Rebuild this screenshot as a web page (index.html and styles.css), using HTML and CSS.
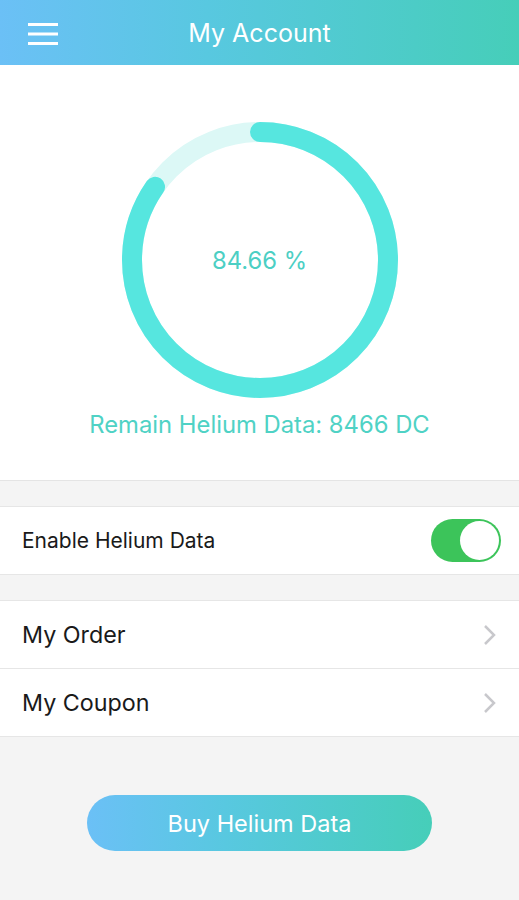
FILE: index.html
```html
<!DOCTYPE html>
<html lang="en">
<head>
    <meta charset="UTF-8">
    <meta name="viewport" content="width=device-width, initial-scale=1.0">
    <title>My Account</title>
    <link rel="stylesheet" href="styles.css">
</head>
<body>
    <header class="topbar">
        <button class="menu-btn" aria-label="Menu">
            <svg width="30" height="24" viewBox="0 0 30 24">
                <path d="M0 2.5h30M0 12h30M0 21.5h30" stroke="#fff" stroke-width="3"/>
            </svg>
        </button>
        <h1 class="title">My Account</h1>
    </header>

    <section class="summary">
        <div class="ring">
            <svg width="280" height="280" viewBox="0 0 280 280">
                <circle cx="140" cy="140" r="128" fill="none" stroke="#dcf8f6" stroke-width="20"/>
                <!-- 84.66% of 2*pi*128 = 804.2 -->
                <circle cx="140" cy="140" r="128" fill="none" stroke="#56e6df" stroke-width="20"
                        stroke-linecap="round" stroke-dasharray="680.9 804.2"
                        transform="rotate(-90 140 140)"/>
            </svg>
            <span class="ring-label">84.66 %</span>
        </div>
        <p class="remain">Remain Helium Data: 8466 DC</p>
    </section>

    <div class="group">
        <div class="row">
            <span class="row-label small">Enable Helium Data</span>
            <span class="switch"><span class="knob"></span></span>
        </div>
    </div>

    <div class="group">
        <div class="row">
            <span class="row-label">My Order</span>
            <svg class="chevron" width="14" height="22" viewBox="0 0 14 22">
                <path d="M2 2l9 9-9 9" fill="none" stroke="#c8c8cc" stroke-width="2.5"/>
            </svg>
        </div>
        <div class="row">
            <span class="row-label">My Coupon</span>
            <svg class="chevron" width="14" height="22" viewBox="0 0 14 22">
                <path d="M2 2l9 9-9 9" fill="none" stroke="#c8c8cc" stroke-width="2.5"/>
            </svg>
        </div>
    </div>

    <div class="actions">
        <button class="buy-btn">Buy Helium Data</button>
    </div>
</body>
</html>
```

FILE: styles.css
```css
body {
    margin: 0;
    background-color: #f4f4f4;
    font-family: Inter, "Liberation Sans", sans-serif;
    color: #1a1a1a;
}

.topbar {
    height: 65px;
    display: flex;
    align-items: center;
    justify-content: center;
    position: relative;
    background: linear-gradient(90deg, #6bc0f6 0%, #58c8e0 40%, #46ceb9 100%);
}

.menu-btn {
    position: absolute;
    left: 28px;
    top: 22px;
    padding: 0;
    border: none;
    background: none;
    line-height: 0;
}

.title {
    margin: 0;
    font-size: 25px;
    font-weight: 400;
    color: #ffffff;
}

.summary {
    background-color: #ffffff;
    border-bottom: 1px solid #e4e4e4;
    padding: 55px 0 42px;
    display: flex;
    flex-direction: column;
    align-items: center;
}

.ring {
    width: 280px;
    height: 280px;
    position: relative;
}

.ring svg {
    display: block;
}

.ring-label {
    position: absolute;
    inset: 0;
    display: flex;
    align-items: center;
    justify-content: center;
    font-size: 23.8px;
    color: #4ccfc4;
}

.remain {
    margin: 12px 0 0;
    line-height: 26px;
    font-size: 23.8px;
    color: #4fd2c5;
}

.group {
    margin-top: 25px;
    background-color: #ffffff;
    border-top: 1px solid #e6e6e6;
    border-bottom: 1px solid #e6e6e6;
}

.row {
    height: 67px;
    display: flex;
    align-items: center;
    justify-content: space-between;
    padding: 0 18px 0 22px;
}

.row + .row {
    border-top: 1px solid #e6e6e6;
}

.row-label {
    font-size: 23.3px;
}

.row-label.small {
    font-size: 21px;
}

.switch {
    width: 70px;
    height: 43px;
    border-radius: 22px;
    background-color: #3cc45a;
    display: flex;
    align-items: center;
    justify-content: flex-end;
    padding: 0 2px;
    box-sizing: border-box;
}

.knob {
    width: 39px;
    height: 39px;
    border-radius: 50%;
    background-color: #ffffff;
}

.chevron {
    margin-right: 4px;
}

.actions {
    display: flex;
    justify-content: center;
    padding-top: 58px;
}

.buy-btn {
    width: 345px;
    height: 56px;
    border: none;
    border-radius: 28px;
    background: linear-gradient(90deg, #6bc0f6 0%, #58c8e0 40%, #46ceb9 100%);
    color: #ffffff;
    font-family: inherit;
    font-size: 23.5px;
}
```
